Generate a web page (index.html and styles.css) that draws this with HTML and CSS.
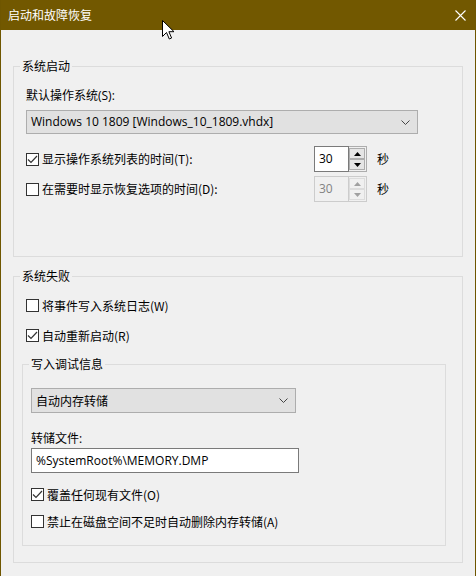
FILE: index.html
```html
<!DOCTYPE html>
<html lang="zh-CN">
<head>
<meta charset="utf-8">
<title>启动和故障恢复</title>
<link rel="stylesheet" href="styles.css">
</head>
<body>
<div class="window">
  <div class="titlebar">
    <span class="title">启动和故障恢复</span>
    <svg class="close" width="11" height="11" viewBox="0 0 11 11"><path d="M0.5 0.5 L10.5 10.5 M10.5 0.5 L0.5 10.5" stroke="#fff" stroke-width="1.1" fill="none"/></svg>
  </div>
  <div class="body">
    <fieldset class="group g1">
      <legend>系统启动</legend>
      <div class="label">默认操作系统(S):</div>
      <div class="combo combo-os">
        <span>Windows 10 1809 [Windows_10_1809.vhdx]</span>
        <svg class="chev" width="9" height="5" viewBox="0 0 9 5"><path d="M0.5 0.5 L4.5 4.5 L8.5 0.5" stroke="#444" stroke-width="1" fill="none"/></svg>
      </div>
      <div class="spinrow first">
        <div class="check">
          <span class="box"><svg width="11" height="11" viewBox="0 0 11 11"><path d="M1 5.5 L4 8.5 L10 2" stroke="#333" stroke-width="1.2" fill="none"/></svg></span>
          <span class="ctext">显示操作系统列表的时间(T):</span>
        </div>
        <div class="spin">
          <div class="spin-text">30</div>
          <div class="spin-btns">
            <div class="sbtn"><svg width="7" height="4" viewBox="0 0 7 4"><path d="M0 4 L3.5 0 L7 4 Z" fill="#000"/></svg></div>
            <div class="sbtn"><svg width="7" height="4" viewBox="0 0 7 4"><path d="M0 0 L3.5 4 L7 0 Z" fill="#000"/></svg></div>
          </div>
        </div>
        <span class="unit">秒</span>
      </div>
      <div class="spinrow second">
        <div class="check">
          <span class="box"></span>
          <span class="ctext">在需要时显示恢复选项的时间(D):</span>
        </div>
        <div class="spin disabled">
          <div class="spin-text">30</div>
          <div class="spin-btns">
            <div class="sbtn"><svg width="7" height="4" viewBox="0 0 7 4"><path d="M0 4 L3.5 0 L7 4 Z" fill="#a0a0a0"/></svg></div>
            <div class="sbtn"><svg width="7" height="4" viewBox="0 0 7 4"><path d="M0 0 L3.5 4 L7 0 Z" fill="#a0a0a0"/></svg></div>
          </div>
        </div>
        <span class="unit">秒</span>
      </div>
    </fieldset>

    <fieldset class="group g2">
      <legend>系统失败</legend>
      <div class="check crow r-w">
        <span class="box"></span>
        <span class="ctext">将事件写入系统日志(W)</span>
      </div>
      <div class="check crow r-r">
        <span class="box"><svg width="11" height="11" viewBox="0 0 11 11"><path d="M1 5.5 L4 8.5 L10 2" stroke="#333" stroke-width="1.2" fill="none"/></svg></span>
        <span class="ctext">自动重新启动(R)</span>
      </div>

      <fieldset class="group inner">
        <legend>写入调试信息</legend>
        <div class="combo combo-dump">
          <span>自动内存转储</span>
          <svg class="chev" width="9" height="5" viewBox="0 0 9 5"><path d="M0.5 0.5 L4.5 4.5 L8.5 0.5" stroke="#444" stroke-width="1" fill="none"/></svg>
        </div>
        <div class="label dump-label">转储文件:</div>
        <div class="textbox">%SystemRoot%\MEMORY.DMP</div>
        <div class="check crow r-o">
          <span class="box"><svg width="11" height="11" viewBox="0 0 11 11"><path d="M1 5.5 L4 8.5 L10 2" stroke="#333" stroke-width="1.2" fill="none"/></svg></span>
          <span class="ctext">覆盖任何现有文件(O)</span>
        </div>
        <div class="check crow r-a">
          <span class="box"></span>
          <span class="ctext">禁止在磁盘空间不足时自动删除内存转储(A)</span>
        </div>
      </fieldset>
    </fieldset>
  </div>
  <svg class="cursor" width="13" height="20" viewBox="0 0 13 20"><path d="M0.5 0.5 L0.5 16.5 L4.5 12.5 L7.3 19 L9.6 18 L6.9 11.7 L12 11.7 Z" fill="#fff" stroke="#000" stroke-width="1" stroke-linejoin="miter"/></svg>
</div>
</body>
</html>
```
FILE: styles.css
```css
html, body {
  margin: 0;
  padding: 0;
  background: #f0f0f0;
}
body {
  font-family: "Segoe UI", "Open Sans", "Noto Sans CJK SC", sans-serif;
  font-size: 12px;
  line-height: 16px;
  color: #000;
}
.window {
  position: relative;
  width: 476px;
  height: 576px;
  box-sizing: border-box;
  background: #f0f0f0;
  border-left: 1px solid #6f5600;
  border-right: 1px solid #6f5600;
  overflow: hidden;
}
.titlebar {
  height: 30px;
  margin: 0 -1px;
  background: #725800;
  display: flex;
  align-items: center;
  padding: 0 10px 0 8px;
  color: #fff;
}
.title {
  flex: 1;
  font-family: "Noto Sans CJK SC", sans-serif;
  line-height: 16px;
}
.close {
  display: block;
  margin-right: 0;
}
.body {
  padding: 28px 12px 0 12px;
}
.group {
  margin: 0;
  border: 1px solid #dcdcdc;
  padding: 0 16px 16px 8px;
  min-inline-size: 0;
}
.group legend {
  padding: 0 2px;
  margin-left: -2px;
  line-height: 16px;
  font-family: "Noto Sans CJK SC", sans-serif;
}
.g1 {
  padding-bottom: 54px;
}
.g2 {
  margin-top: 11px;
}
.g1 > .label,
.g1 > .combo,
.g1 > .spinrow {
  margin-left: 4px;
}
.label {
  font-family: "Open Sans", "Noto Sans CJK SC", sans-serif;
  height: 16px;
}
.g1 > .label {
  margin-top: 14px;
}
.combo {
  display: flex;
  align-items: center;
  box-sizing: border-box;
  height: 24px;
  background: #e1e1e1;
  border: 1px solid #adadad;
  padding: 0 7px 0 4px;
}
.combo span {
  flex: 1;
  white-space: nowrap;
}
.combo-os {
  margin-top: 6px;
  width: 392px;
}
.chev {
  display: block;
}
.spinrow {
  display: flex;
  align-items: center;
  height: 26px;
}
.spinrow.first {
  margin-top: 12px;
}
.spinrow.second {
  margin-top: 4px;
}
.spinrow .check {
  width: 288px;
}
.check {
  display: flex;
  align-items: center;
}
.box {
  width: 13px;
  height: 13px;
  box-sizing: border-box;
  border: 1px solid #333;
  background: #fff;
  display: flex;
  align-items: center;
  justify-content: center;
  flex: none;
}
.box svg {
  display: block;
}
.ctext {
  margin-left: 3px;
  white-space: nowrap;
  font-family: "Noto Sans CJK SC", sans-serif;
}
.spin {
  display: flex;
  width: 53px;
  height: 26px;
  box-sizing: border-box;
}
.spin-text {
  width: 35px;
  box-sizing: border-box;
  border: 1px solid #7a7a7a;
  background: #fff;
  padding: 4px 0 0 4px;
  line-height: 16px;
}
.spin-btns {
  flex: 1;
  box-sizing: border-box;
  border: 1px solid #adadad;
  border-left: none;
  display: flex;
  flex-direction: column;
  padding: 1px 1px 1px 0;
  gap: 0;
}
.sbtn {
  flex: 1;
  box-sizing: border-box;
  border: 1px solid #adadad;
  background: #e5e5e5;
  display: flex;
  align-items: center;
  justify-content: center;
}
.spin.disabled .spin-text {
  border-color: #cccccc;
  background: #f0f0f0;
  color: #838383;
}
.spin.disabled .spin-btns {
  border-color: #cccccc;
}
.spin.disabled .sbtn {
  border-color: #dcdcdc;
  background: #f0f0f0;
}
.unit {
  margin-left: 10px;
  font-family: "Noto Sans CJK SC", sans-serif;
}
.crow {
  height: 15px;
}
.g2 > .crow {
  margin-left: 4px;
}
.r-w {
  margin-top: 14px;
}
.r-r {
  margin-top: 15px;
}
.inner {
  margin-top: 13px;
  padding: 0 0 16px 8px;
}
.combo-dump {
  margin-top: 16px;
  width: 265px;
  height: 25px;
  font-family: "Noto Sans CJK SC", sans-serif;
}
.dump-label {
  margin-top: 18px;
}
.textbox {
  margin-top: 1px;
  width: 268px;
  height: 25px;
  box-sizing: border-box;
  border: 1px solid #7a7a7a;
  background: #fff;
  padding: 4px 0 0 4px;
  font-family: "Open Sans", sans-serif;
}
.r-o {
  margin-top: 14px;
}
.r-a {
  margin-top: 12px;
}
.cursor {
  position: absolute;
  left: 161px;
  top: 20px;
}
```
